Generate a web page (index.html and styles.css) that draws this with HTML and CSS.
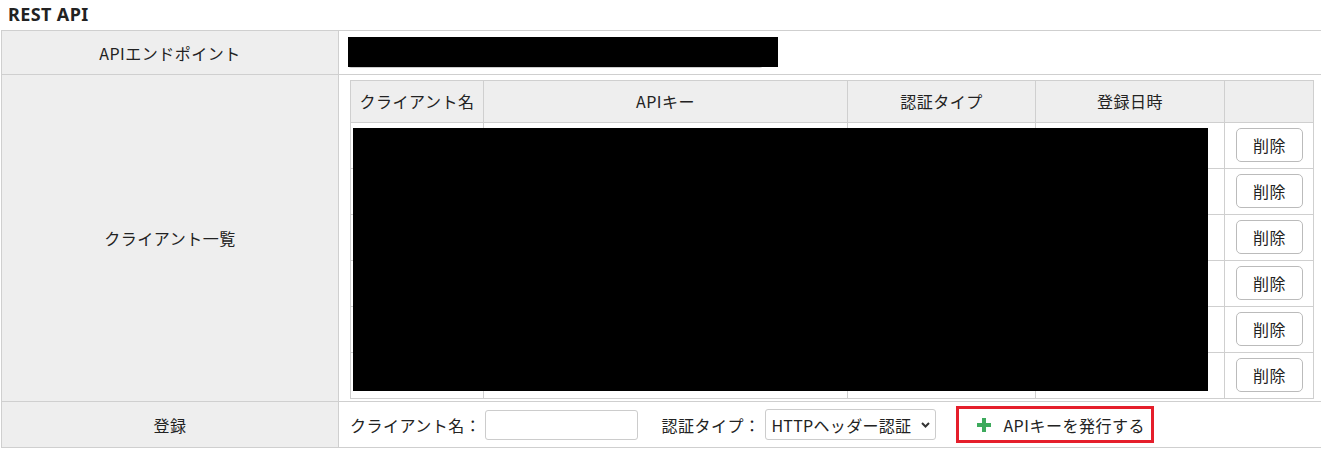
FILE: index.html
```html
<!DOCTYPE html>
<html lang="ja">
<head>
  <meta charset="UTF-8">
  <title>REST API</title>
  <link rel="stylesheet" href="styles.css">
</head>
<body>
  <h3 class="section-title">REST API</h3>

  <table class="setting-table">
    <tr class="row-endpoint">
      <th>APIエンドポイント</th>
      <td>
        <div class="endpoint">
          <input type="text" class="endpoint-input" readonly>
          <span class="masked masked-endpoint"></span>
        </div>
      </td>
    </tr>
    <tr class="row-clients">
      <th>クライアント一覧</th>
      <td>
        <div class="client-list">
          <table class="client-table">
            <colgroup>
              <col class="col-name">
              <col class="col-key">
              <col class="col-auth">
              <col class="col-date">
              <col class="col-action">
            </colgroup>
            <thead>
              <tr>
                <th>クライアント名</th>
                <th>APIキー</th>
                <th>認証タイプ</th>
                <th>登録日時</th>
                <th></th>
              </tr>
            </thead>
            <tbody>
              <tr><td></td><td></td><td></td><td></td><td><button class="delete-btn">削除</button></td></tr>
              <tr><td></td><td></td><td></td><td></td><td><button class="delete-btn">削除</button></td></tr>
              <tr><td></td><td></td><td></td><td></td><td><button class="delete-btn">削除</button></td></tr>
              <tr><td></td><td></td><td></td><td></td><td><button class="delete-btn">削除</button></td></tr>
              <tr><td></td><td></td><td></td><td></td><td><button class="delete-btn">削除</button></td></tr>
              <tr><td></td><td></td><td></td><td></td><td><button class="delete-btn">削除</button></td></tr>
            </tbody>
          </table>
          <span class="masked masked-rows"></span>
        </div>
      </td>
    </tr>
    <tr class="row-register">
      <th>登録</th>
      <td>
        <div class="register-form">
          <label class="form-label" for="clientName">クライアント名：</label>
          <input type="text" id="clientName" class="client-input">
          <label class="form-label" for="authType">認証タイプ：</label>
          <span class="select-wrap">
            <select id="authType" class="auth-select">
              <option>HTTPヘッダー認証</option>
            </select>
            <svg class="select-arrow" width="9" height="6" viewBox="0 0 9 6">
              <path d="M1 1 L4.5 4.5 L8 1" fill="none" stroke="#333" stroke-width="2"/>
            </svg>
          </span>
          <button class="issue-btn">
            <svg class="plus-icon" width="14" height="14" viewBox="0 0 14 14">
              <path d="M7 0 V14 M0 7 H14" stroke="#3daa5c" stroke-width="4"/>
            </svg>
            <span>APIキーを発行する</span>
          </button>
        </div>
      </td>
    </tr>
  </table>
</body>
</html>
```

FILE: styles.css
```css
html {
  overflow-x: hidden;
}

body {
  margin: 0;
  font-family: "Noto Sans CJK JP", "Noto Sans", sans-serif;
  font-size: 16px;
  letter-spacing: 0.5px;
  color: #222;
  background-color: #fff;
}

.section-title {
  margin: 0;
  padding: 0 8px;
  height: 30px;
  line-height: 28px;
  font-size: 18px;
  font-weight: bold;
  letter-spacing: 0.4px;
  font-family: "Noto Sans", "Noto Sans CJK JP", sans-serif;
}

/* outer settings table */
.setting-table {
  border-collapse: collapse;
  table-layout: fixed;
  width: 1321px;
  margin-left: 1px;
}

.setting-table > tbody > tr > th,
.setting-table > tbody > tr > td {
  border: 1px solid #cfcfcf;
  padding: 0 9px;
}

.setting-table > tbody > tr > th {
  width: 320px;
  padding: 0 8px;
  background-color: #eee;
  font-weight: normal;
  text-align: center;
}

.row-endpoint > th,
.row-endpoint > td {
  height: 43px;
}

.row-clients > th,
.row-clients > td {
  height: 326px;
}

.row-register > th,
.row-register > td {
  height: 45px;
}

.masked {
  position: absolute;
  background-color: #000;
}

.endpoint {
  position: relative;
  height: 31px;
}

.endpoint-input {
  display: block;
  box-sizing: border-box;
  width: 415px;
  height: 31px;
  border: 1px solid #ccc;
  border-radius: 3px;
}

.masked-endpoint {
  left: 0;
  top: 0;
  width: 430px;
  height: 30px;
}

/* client list */
.client-list {
  position: relative;
  margin-left: 2px;
  margin-top: 2px;
}

.client-table {
  border-collapse: collapse;
  width: 963px;
  table-layout: fixed;
}

.col-name { width: 133px; }
.col-key { width: 364px; }
.col-auth { width: 188px; }
.col-date { width: 189px; }
.col-action { width: 89px; }

.client-table th,
.client-table td {
  border: 1px solid #cfcfcf;
  padding: 0;
  text-align: center;
}

.client-table th {
  height: 41px;
  background-color: #eee;
  font-weight: normal;
}

.client-table td {
  height: 45px;
}

.delete-btn {
  box-sizing: border-box;
  width: 67px;
  height: 34px;
  margin-left: 1px;
  padding: 0;
  border: 1px solid #bbb;
  border-radius: 5px;
  background-color: #fff;
  font-family: inherit;
  font-size: 16px;
  letter-spacing: 0.5px;
  color: #222;
}

.masked-rows {
  left: 3px;
  top: 48px;
  width: 855px;
  height: 263px;
}

/* register form */
.register-form {
  display: flex;
  align-items: center;
  padding-left: 2px;
}

.form-label {
  white-space: nowrap;
}

.client-input {
  box-sizing: border-box;
  width: 153px;
  height: 30px;
  margin: 0 23px 0 4px;
  border: 1px solid #ccc;
  border-radius: 3px;
}

.select-wrap {
  position: relative;
  margin: 0 20px 0 5px;
}

.auth-select {
  appearance: none;
  -webkit-appearance: none;
  box-sizing: border-box;
  display: block;
  width: 171px;
  height: 31px;
  padding: 0 22px 0 5px;
  border: 1px solid #ccc;
  border-radius: 3px;
  background-color: #fff;
  font-family: inherit;
  font-size: 16px;
  letter-spacing: 0.3px;
  color: #222;
}

.select-arrow {
  position: absolute;
  right: 6px;
  top: 13px;
  pointer-events: none;
}

.issue-btn {
  box-sizing: border-box;
  display: flex;
  align-items: center;
  width: 198px;
  height: 37px;
  padding: 0 0 0 18px;
  border: 3px solid #e51e2b;
  background-color: #fff;
  font-family: inherit;
  font-size: 16px;
  letter-spacing: 0.5px;
  color: #222;
}

.plus-icon {
  margin-right: 12px;
}
```
